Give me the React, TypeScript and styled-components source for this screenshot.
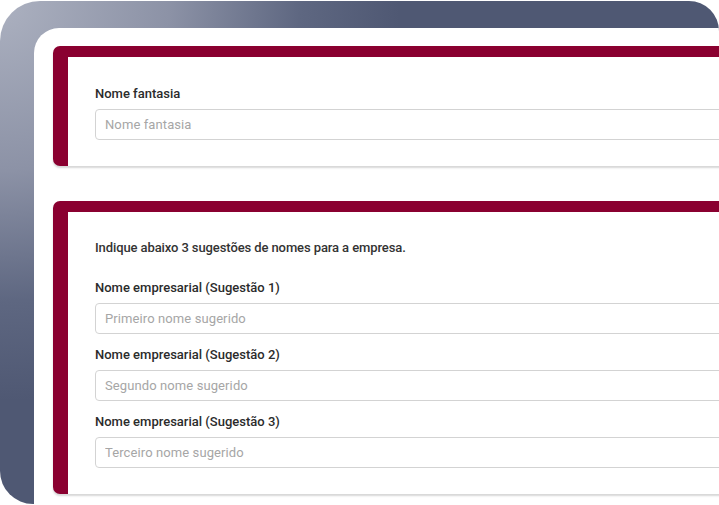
import React from 'react'
import styled, { createGlobalStyle } from 'styled-components'

const GlobalStyle = createGlobalStyle`
    html, body {
        margin: 0;
        padding: 0;
        background: #ffffff;
    }
    * {
        box-sizing: border-box;
    }
`

const Frame = styled.div`
    width: 719px;
    height: 503px;
    margin-top: 1px;
    padding: 27px 0 0 34px;
    border-radius: 40px 30px 0 33px;
    background: radial-gradient(circle at 0 0, #acb1c0 0px, #8c92a6 170px, #5e6781 300px, #4f5873 400px);
    overflow: hidden;
    font-family: Roboto, "Open Sans", sans-serif;
`

const Screen = styled.div`
    height: 100%;
    width: 720px;
    background: #ffffff;
    border-top-left-radius: 25px;
    padding: 18px 0 0 19px;
    display: flex;
    flex-direction: column;
    gap: 35px;
    overflow: hidden;
`

const Card = styled.section<{ $top: number }>`
    width: 720px;
    flex: none;
    background: #ffffff;
    border-left: 15px solid #8a0030;
    border-top: 11px solid #8a0030;
    border-radius: 7px;
    box-shadow: 0 2px 2px rgba(0, 0, 0, 0.16);
    padding: ${props => props.$top}px 0 26px 27px;
    display: flex;
    flex-direction: column;
    gap: 12px;
`

const Intro = styled.p`
    margin: 0 0 10px;
    font-size: 13px;
    line-height: 18px;
    font-weight: 500;
    letter-spacing: -0.1px;
    color: #333333;
`

const Field = styled.div`
    display: flex;
    flex-direction: column;
    gap: 6px;
`

const Label = styled.label`
    font-size: 13px;
    line-height: 18px;
    font-weight: 500;
    color: #2b2b2b;
`

const Input = styled.input`
    height: 31px;
    width: 100%;
    border: 1px solid #d3d3d3;
    border-radius: 4px;
    padding: 0 9px;
    font-family: inherit;
    font-size: 13px;
    letter-spacing: 0.1px;
    color: #333333;
    outline: none;
    background: #ffffff;

    &::placeholder {
        color: #a6a6a6;
    }
`

const suggestions = [
    { label: 'Nome empresarial (Sugestão 1)', placeholder: 'Primeiro nome sugerido' },
    { label: 'Nome empresarial (Sugestão 2)', placeholder: 'Segundo nome sugerido' },
    { label: 'Nome empresarial (Sugestão 3)', placeholder: 'Terceiro nome sugerido' },
]

export default function App() {
    return <>
        <GlobalStyle />
        <Frame>
            <Screen>
                <Card $top={28}>
                    <Field>
                        <Label>Nome fantasia</Label>
                        <Input placeholder="Nome fantasia" />
                    </Field>
                </Card>
                <Card $top={27}>
                    <Intro>Indique abaixo 3 sugestões de nomes para a empresa.</Intro>
                    {suggestions.map(s =>
                        <Field key={s.label}>
                            <Label>{s.label}</Label>
                            <Input placeholder={s.placeholder} />
                        </Field>
                    )}
                </Card>
            </Screen>
        </Frame>
    </>
}
